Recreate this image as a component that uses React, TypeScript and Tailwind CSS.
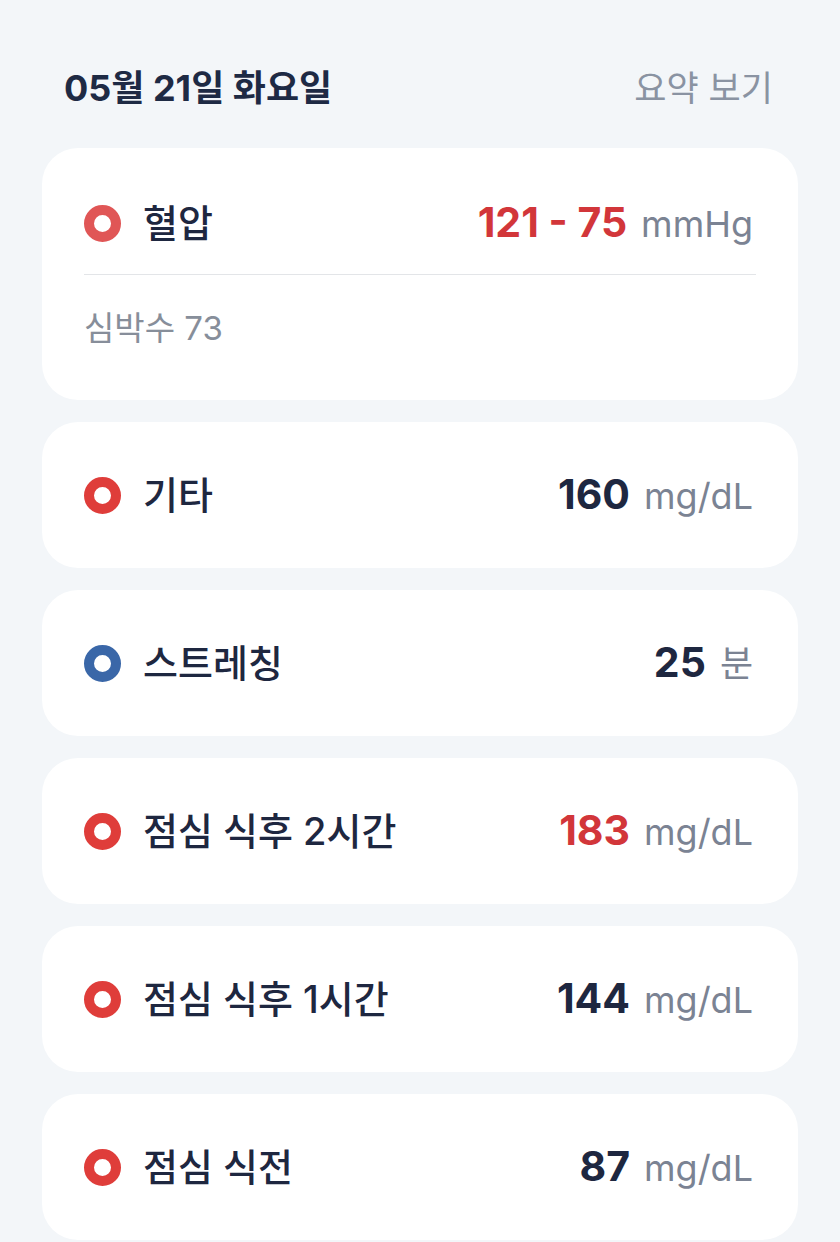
import React from "react";

const font = { fontFamily: '"Inter", "Noto Sans CJK KR", sans-serif' };

function Dot({ color }: { color: "red" | "lightred" | "blue" }) {
  const cls =
    color === "blue"
      ? "border-[#3a67a8]"
      : color === "lightred"
      ? "border-[#e05656]"
      : "border-[#df3d3a]";
  return <div className={`w-[37px] h-[37px] rounded-full border-[10px] ${cls} shrink-0`} />;
}

function Row({
  dot,
  label,
  value,
  unit,
  valueRed,
}: {
  dot: "red" | "lightred" | "blue";
  label: string;
  value: string;
  unit: string;
  valueRed?: boolean;
}) {
  return (
    <div className="flex items-center justify-between h-[52px]">
      <div className="flex items-center gap-[22px]">
        <Dot color={dot} />
        <span className="text-[38px] font-medium text-[#1e2740] leading-[52px]">{label}</span>
      </div>
      <div className="flex items-baseline gap-[14px] leading-[48px] mr-[3px]">
        <span className={`text-[41px] font-bold ${valueRed ? "text-[#d2363a]" : "text-[#1e2740]"}`}>{value}</span>
        <span className="text-[36px] text-[#7b8393]">{unit}</span>
      </div>
    </div>
  );
}

export default function App() {
  const items: { dot: "red" | "blue"; label: string; value: string; unit: string; red?: boolean }[] = [
    { dot: "red", label: "기타", value: "160", unit: "mg/dL" },
    { dot: "blue", label: "스트레칭", value: "25", unit: "분" },
    { dot: "red", label: "점심 식후 2시간", value: "183", unit: "mg/dL", red: true },
    { dot: "red", label: "점심 식후 1시간", value: "144", unit: "mg/dL" },
    { dot: "red", label: "점심 식전", value: "87", unit: "mg/dL" },
  ];
  return (
    <div style={font} className="min-h-[1242px] bg-[#f3f6f9] px-[42px] pt-[62px] pb-[10px]">
      <div className="flex items-center justify-between pl-[22px] pr-[25px] h-[52px]">
        <span className="text-[36px] font-bold text-[#1e2a44]">05월 21일 화요일</span>
        <span className="text-[35px] text-[#8a93a2]">요약 보기</span>
      </div>
      <div className="mt-[34px] flex flex-col gap-[22px]">
        <div className="bg-white rounded-[36px] pl-[42px] pr-[42px] pt-[49px] pb-[52px]">
          <Row dot="lightred" label="혈압" value="121 - 75" unit="mmHg" valueRed />
          <div className="mt-[25px] h-px bg-[#e3e5e8]" />
          <div className="mt-[33px] text-[33px] leading-[40px] text-[#878e9a]">심박수 73</div>
        </div>
        {items.map((it, i) => (
          <div key={i} className="bg-white rounded-[36px] pl-[42px] pr-[42px] h-[146px] flex flex-col justify-center">
            <Row dot={it.dot} label={it.label} value={it.value} unit={it.unit} valueRed={it.red} />
          </div>
        ))}
      </div>
    </div>
  );
}
